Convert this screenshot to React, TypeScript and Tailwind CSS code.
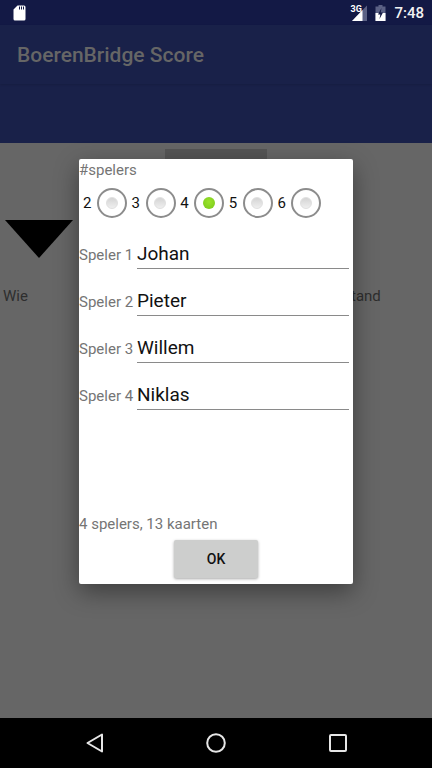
const font = { fontFamily: "Roboto, sans-serif" };

function Radio({ label, on }: { label: string; on?: boolean }) {
  return (
    <div className="flex items-center w-[48.6px] shrink-0">
      <span className="w-[18px] pl-[4px] text-[15px] leading-[20px] text-[#111]">{label}</span>
      <span className="w-[30px] h-[30px] rounded-full border-2 border-[#8c8c8c] flex items-center justify-center bg-white">
        <span
          className={
            on
              ? "w-[12px] h-[12px] mb-[1px] mr-[1px] rounded-full bg-[radial-gradient(circle_at_50%_40%,#9be32c,#78c81a)]"
              : "w-[12px] h-[12px] mb-[1px] mr-[1px] rounded-full bg-[linear-gradient(#d4d4d4,#efefef)] border border-[#e0e0e0]"
          }
        />
      </span>
    </div>
  );
}

function Player({ n, name }: { n: number; name: string }) {
  return (
    <div className="flex items-end h-[47px]">
      <span className="w-[58px] shrink-0 text-[15px] leading-[20px] mb-[4px] text-[#757575] whitespace-nowrap">Speler {n}</span>
      <span className="w-[212px] h-[36px] border-b border-[#8a8a8a] text-[19px] leading-[28px] text-[#111] pt-[7px]">{name}</span>
    </div>
  );
}

export default function App() {
  return (
    <div className="relative w-[432px] h-[768px] overflow-hidden flex flex-col bg-[#666666]" style={font}>
      <div className="h-[25px] bg-[#131945] flex items-center justify-between pl-[13px] pr-[8px] shrink-0">
        <svg width="13" height="16" viewBox="0 0 13 16">
          <path d="M4.500 0.500H11a1.500 1.500 0 0 1 1.500 1.500v12a1.500 1.500 0 0 1-1.500 1.500H2A1.500 1.500 0 0 1 .5 14V4.500z" fill="#fff" />
          <path d="M6 1.500h1v3H6zM8 1.500h1v3H8zM10 1.500h1v3h-1z" fill="#131945" />
        </svg>
        <div className="flex items-center">
          <span className="relative w-[20px] h-[16px] mr-[8px]">
            <svg width="20" height="16" viewBox="0 0 20 16" className="absolute left-0 top-0">
              <path d="M20 0.500V16H5z" fill="#5b6185" />
              <path d="M15.500 5V16H5z" fill="#fff" />
            </svg>
            <span className="absolute left-[3px] top-[-1px] text-[9px] leading-[10px] font-bold text-white">3G</span>
          </span>
          <svg width="11" height="16" viewBox="0 0 11 16" className="mr-[8px]">
            <path d="M3.500 0h4v1.500H10.500V16H.5V1.500h3z" fill="#5b6185" />
            <path d="M.5 8H10.500V16H.5z" fill="#fff" />
            <path d="M6.500 3 3 9.500h2.300L4.500 14l3.500-6.500H5.700z" fill="#131945" />
          </svg>
          <span className="text-[15px] leading-[20px] font-medium text-[#f2f2f2]">7:48</span>
        </div>
      </div>

      <div className="h-[59px] bg-[#192149] flex items-center pl-[17px] shadow-[0_1px_2px_rgba(0,0,0,0.12)] z-10 shrink-0">
        <span className="text-[21px] leading-[28px] font-medium text-[#666666]">BoerenBridge Score</span>
      </div>
      <div className="h-[59px] bg-[#192149] shrink-0" />

      <div className="relative flex-1 bg-[#666666]">
        <div className="absolute left-[165px] top-[6px] w-[102px] h-[40px] bg-[#555555]" />
        <div className="absolute left-[5px] top-[77px] w-0 h-0 border-l-[34px] border-r-[34px] border-t-[38px] border-l-transparent border-r-transparent border-t-black" />
        <span className="absolute left-[3px] top-[143px] text-[15px] leading-[20px] text-[#2e2e2e]">Wie</span>
        <span className="absolute left-[351px] top-[143px] text-[15px] leading-[20px] text-[#2e2e2e]">tand</span>
      </div>

      <div className="h-[50px] bg-black flex items-center shrink-0">
        <div className="relative w-full h-full">
          <svg width="18" height="20" viewBox="0 0 18 20" className="absolute left-[86px] top-[15px]">
            <path d="M16 1.500V18.500L1.500 10z" fill="none" stroke="#e6e6e6" strokeWidth="2" strokeLinejoin="round" />
          </svg>
          <svg width="20" height="20" viewBox="0 0 20 20" className="absolute left-[206px] top-[15px]">
            <circle cx="10" cy="10" r="8.800" fill="none" stroke="#e6e6e6" strokeWidth="2" />
          </svg>
          <svg width="18" height="18" viewBox="0 0 18 18" className="absolute left-[329px] top-[16px]">
            <rect x="1" y="1" width="16" height="16" rx="1" fill="none" stroke="#e6e6e6" strokeWidth="2" />
          </svg>
        </div>
      </div>

      <div className="absolute left-[79px] top-[159px] w-[274px] h-[425px] bg-white rounded-[2px] shadow-[0_8px_24px_rgba(0,0,0,0.4)] flex flex-col">
        <div className="text-[15px] leading-[20px] text-[#757575] mt-[1px]">#spelers</div>
        <div className="flex items-center mt-[8px] h-[30px]">
          <Radio label="2" />
          <Radio label="3" />
          <Radio label="4" on />
          <Radio label="5" />
          <Radio label="6" />
        </div>
        <div className="flex flex-col mt-[4px]">
          <Player n={1} name="Johan" />
          <Player n={2} name="Pieter" />
          <Player n={3} name="Willem" />
          <Player n={4} name="Niklas" />
        </div>
        <div className="flex-1" />
        <div className="text-[15px] leading-[20px] text-[#757575]">4 spelers, 13 kaarten</div>
        <div className="flex justify-center mt-[6px] mb-[6px]">
          <div className="w-[84px] h-[38px] bg-[#cdcecd] rounded-[2px] shadow-[0_1px_3px_rgba(0,0,0,0.35)] flex items-center justify-center text-[14px] font-medium text-[#111]">
            OK
          </div>
        </div>
      </div>
    </div>
  );
}
